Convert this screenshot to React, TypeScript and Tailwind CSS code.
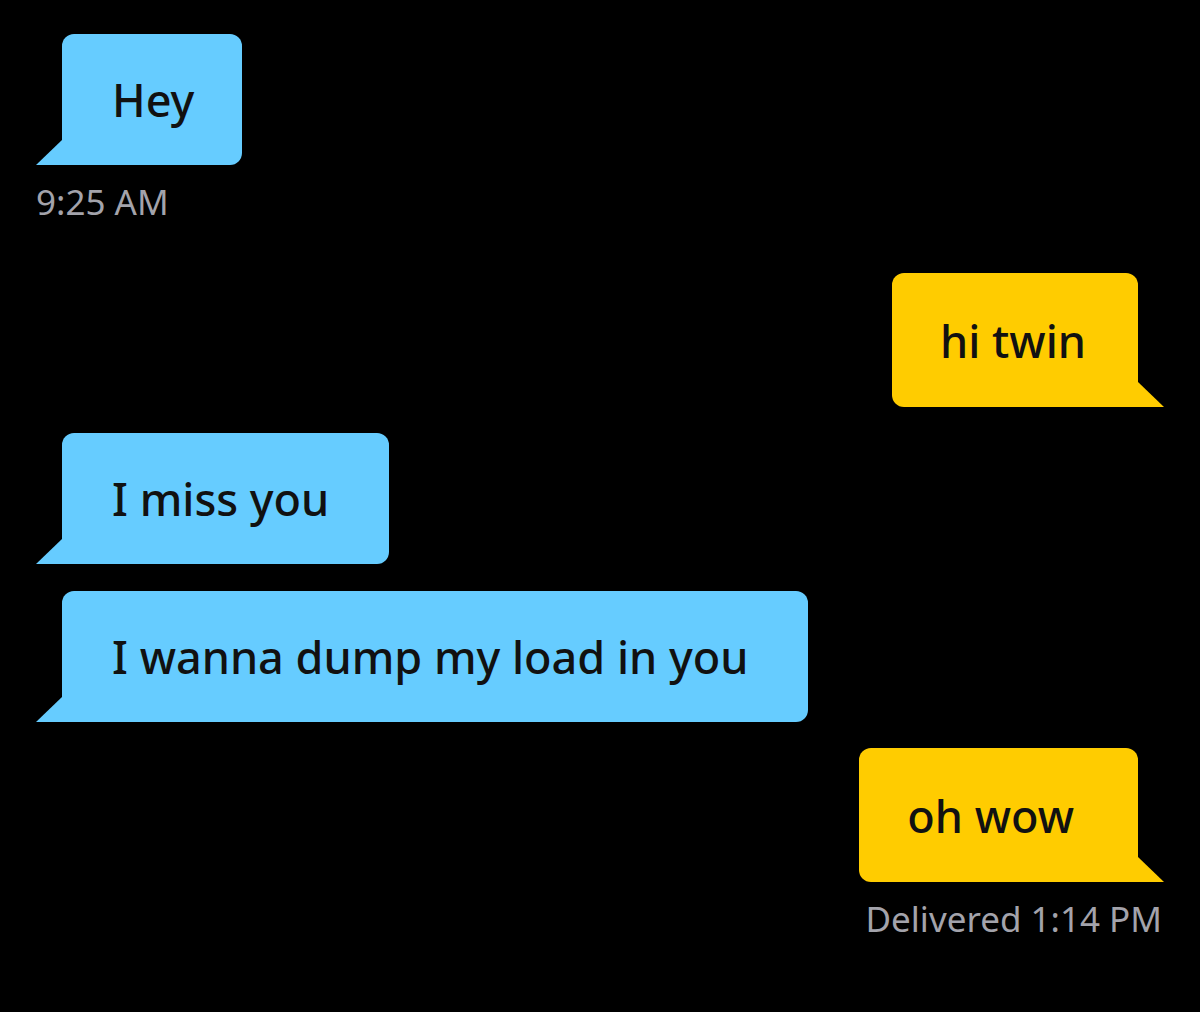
import type { ReactNode } from 'react'

type Side = 'in' | 'out'

const Tail = ({ side }: { side: Side }) => (
  <svg width="26" height="25" viewBox="0 0 26 25" className="shrink-0 block">
    {side === 'in' ? (
      <polygon points="26,0 26,25 0,25" fill="#66ccff" />
    ) : (
      <polygon points="0,0 0,25 26,25" fill="#ffcc00" />
    )}
  </svg>
)

/**
 * @desc chat bubble, tail sits on the bottom corner towards the sender
 */
const Bubble = ({ side, pr, children }: { side: Side; pr?: string; children: ReactNode }) => (
  <div className={`flex items-end ${side === 'out' ? 'justify-end' : 'justify-start'}`}>
    {side === 'in' && <Tail side="in" />}
    <div
      className={
        side === 'in'
          ? `h-[131px] flex items-center pl-[50px] ${pr ?? 'pr-[60px]'} bg-[#66ccff] rounded-[12px] rounded-bl-none`
          : `h-[134px] flex items-center pl-[48px] ${pr ?? 'pr-[52px]'} bg-[#ffcc00] rounded-[12px] rounded-br-none`
      }
    >
      <span className="text-[45px] leading-none text-[#111111] font-medium whitespace-nowrap">{children}</span>
    </div>
    {side === 'out' && <Tail side="out" />}
  </div>
)

const Meta = ({ className, children }: { className: string; children: ReactNode }) => (
  <div className={`text-[35px] leading-[40px] text-[#a3a3ab] ${className}`} style={{ fontFamily: '"Noto Sans", "Open Sans", sans-serif' }}>
    {children}
  </div>
)

export default function App() {
  return (
    <div className="w-[1200px] h-[1012px] bg-black overflow-hidden px-[36px] pt-[34px] flex flex-col" style={{ fontFamily: '"Noto Sans", "Open Sans", sans-serif' }}>
      <Bubble side="in" pr="pr-[48px]">Hey</Bubble>
      {/*time*/}
      <Meta className="mt-[17px]">9:25 AM</Meta>

      <div className="mt-[51px]">
        <Bubble side="out">hi twin</Bubble>
      </div>
      <div className="mt-[26px]">
        <Bubble side="in">I miss you</Bubble>
      </div>
      <div className="mt-[27px]">
        <Bubble side="in">I wanna dump my load in you</Bubble>
      </div>
      <div className="mt-[26px]">
        <Bubble side="out" pr="pr-[64px]">oh wow</Bubble>
      </div>

      {/*delivered*/}
      <Meta className="mt-[17px] self-end pr-[2px]">Delivered 1:14 PM</Meta>
    </div>
  )
}
